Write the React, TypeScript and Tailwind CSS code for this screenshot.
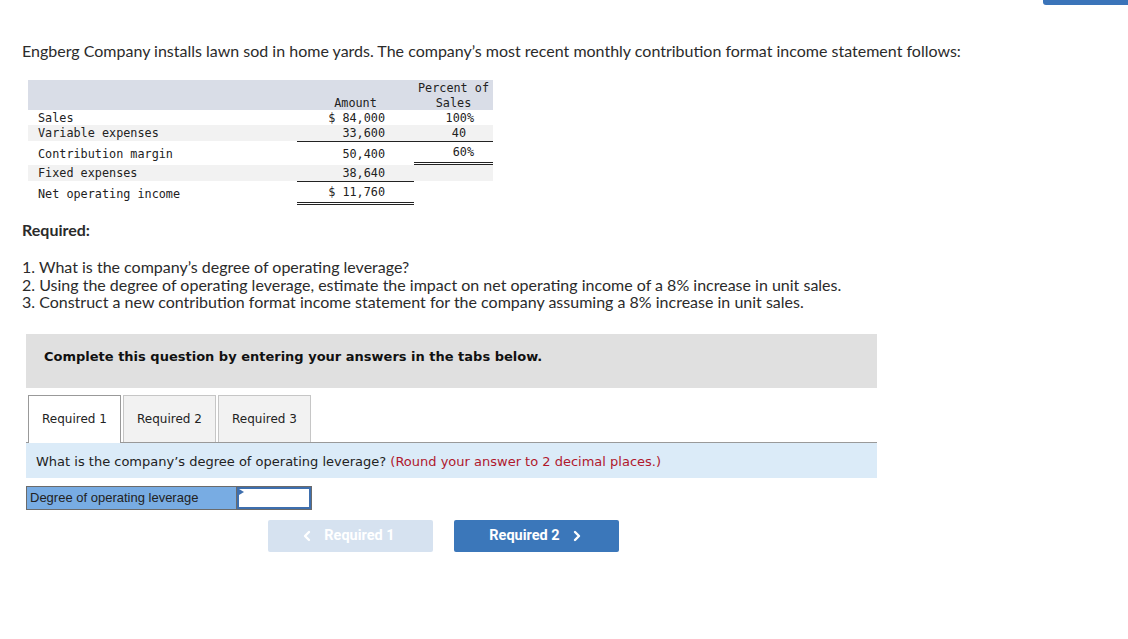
import React from "react";

const mono = { fontFamily: "'DejaVu Sans Mono', 'Liberation Mono', monospace" };

function Chev({ dir }: { dir: "l" | "r" }) {
  return (
    <svg width="10" height="12" viewBox="0 0 10 12" fill="none" stroke="currentColor" strokeWidth="2.4" strokeLinecap="round" strokeLinejoin="round">
      {dir === "r" ? <path d="M3 2l4 4-4 4" /> : <path d="M7 2L3 6l4 4" />}
    </svg>
  );
}

export default function App() {
  return (
    <div className="relative w-[1128px] h-[639px] bg-white overflow-hidden text-[#2b2b2b]" style={{ fontFamily: "Lato, 'Open Sans', sans-serif" }}>
      <div className="absolute right-0 top-0 w-[85px] h-[5px] bg-[#3b74b9] rounded-bl-[3px]" />
      <div className="pt-[41px] pl-[22px]">
        <p className="text-[16px] leading-[20px]">
          Engberg Company installs lawn sod in home yards. The company’s most recent monthly contribution format income statement follows:
        </p>

        <div className="mt-[19px] ml-[6px] w-[465px] text-[11.8px] text-[#222]" style={mono}>
          <div className="grid grid-cols-[269px_117px_79px] h-[30px] bg-[#d9dde7] leading-[15px]">
            <div />
            <div className="flex items-end justify-center translate-y-[1px]">Amount</div>
            <div className="flex flex-col items-center justify-end text-center translate-y-[1px]">
              <span>Percent of</span>
              <span>Sales</span>
            </div>
          </div>
          <div className="grid grid-cols-[269px_117px_79px] h-[15px] leading-[15px] pt-[1px]">
            <div className="pl-[10px]">Sales</div>
            <div className="text-right pr-[29px]">$ 84,000</div>
            <div className="text-right pr-[19px]">100%</div>
          </div>
          <div className="grid grid-cols-[269px_117px_79px] h-[16px] leading-[15px] bg-[#f2f2f2]">
            <div className="pl-[10px] pt-[1px]">Variable expenses</div>
            <div className="text-right pr-[29px] pt-[1px] border-b border-[#222]">33,600</div>
            <div className="text-right pr-[27px] pt-[1px] border-b border-[#222]">40</div>
          </div>
          <div className="grid grid-cols-[269px_117px_79px] h-[24px] leading-[15px]">
            <div className="pl-[10px] pt-[6px]">Contribution margin</div>
            <div className="text-right pr-[29px] pt-[6px]">50,400</div>
            <div className="text-right pr-[19px] pt-[4px] border-b-[3px] border-double border-[#222]">60%</div>
          </div>
          <div className="grid grid-cols-[269px_117px_79px] h-[16px] leading-[15px] bg-[#f2f2f2]">
            <div className="pl-[10px] pt-[1px]">Fixed expenses</div>
            <div className="text-right pr-[29px] pt-[1px] border-b border-[#222] bg-[#f2f2f2]">38,640</div>
            <div />
          </div>
          <div className="grid grid-cols-[269px_117px_79px] h-[24px] leading-[15px]">
            <div className="pl-[10px] pt-[6px]">Net operating income</div>
            <div className="text-right pr-[29px] pt-[4px] border-b-[3px] border-double border-[#222]">$ 11,760</div>
            <div />
          </div>
        </div>

        <p className="mt-[15px] text-[16px] font-bold leading-[20px]">Required:</p>
        <div className="mt-[18px] text-[16px] leading-[17.5px]">
          <p>1. What is the company’s degree of operating leverage?</p>
          <p>2. Using the degree of operating leverage, estimate the impact on net operating income of a 8% increase in unit sales.</p>
          <p>3. Construct a new contribution format income statement for the company assuming a 8% increase in unit sales.</p>
        </div>
      </div>

      <div className="ml-[26px] mt-[23px] w-[851px]" style={{ fontFamily: "'DejaVu Sans', Verdana, sans-serif" }}>
        <div className="h-[54px] bg-[#e0e0e0] flex items-center pl-[18px] pb-[8px] text-[13px] font-bold text-[#111]">
          Complete this question by entering your answers in the tabs below.
        </div>
        <div className="mt-[7px] flex items-end gap-[2px] pl-[2px] border-b border-[#999] h-[48px] text-[12px] text-[#222]">
          <div className="w-[93px] h-[48px] bg-white border border-b-0 border-[#999] flex items-center justify-center -mb-px">Required 1</div>
          <div className="w-[93px] h-[47px] bg-[#f2f2f2] border border-b-0 border-[#c6c6c6] flex items-center justify-center pt-[1px]">Required 2</div>
          <div className="w-[93px] h-[47px] bg-[#f2f2f2] border border-b-0 border-[#c6c6c6] flex items-center justify-center pt-[1px]">Required 3</div>
        </div>
        <div className="h-[35px] bg-[#dbebf8] flex items-center pl-[10px] pt-[3px] text-[13px] text-[#222]">
          What is the company’s degree of operating leverage?&nbsp;<span className="text-[#b0182d]">(Round your answer to 2 decimal places.)</span>
        </div>
        <div className="mt-[8px] flex h-[24px] w-[286px] border border-[#6b6b6b]">
          <div className="w-[210px] bg-[#78ace3] border-r border-[#6b6b6b] pl-[3px] flex items-center text-[13px] text-[#222]" style={{ fontFamily: "'Liberation Sans', Arial, sans-serif" }}>
            Degree of operating leverage
          </div>
          <div className="relative flex-1 bg-white border-2 border-[#3e6fae]">
            <div className="absolute left-0 top-0 w-0 h-0 border-t-[3px] border-b-[3px] border-l-[5px] border-t-transparent border-b-transparent border-l-[#3e6fae]" />
          </div>
        </div>
        <div className="mt-[10px] ml-[242px] flex gap-[21px]" style={{ fontFamily: "Roboto, 'Liberation Sans', sans-serif" }}>
          <div className="w-[165px] h-[32px] rounded-[2px] bg-[#d6e2f0] text-white font-bold text-[14.5px] flex items-center justify-center gap-[12px] pr-[4px] pt-[1px]">
            <Chev dir="l" /><span>Required 1</span>
          </div>
          <div className="w-[165px] h-[32px] rounded-[2px] bg-[#3b77ba] text-white font-bold text-[14.5px] flex items-center justify-center gap-[12px] pr-[2px] pt-[1px]">
            <span>Required 2</span><Chev dir="r" />
          </div>
        </div>
      </div>
    </div>
  );
}
